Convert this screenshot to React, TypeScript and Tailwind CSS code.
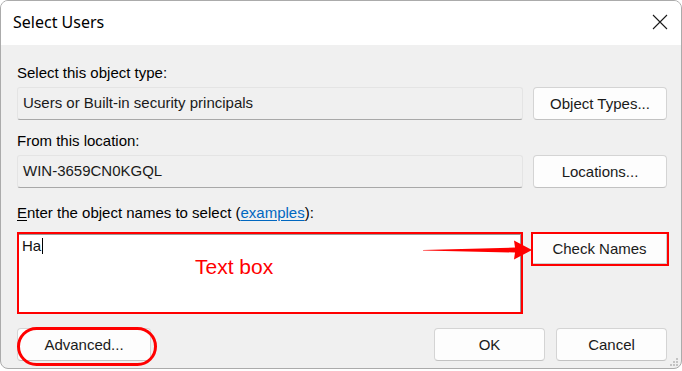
function Field({ text }: { text: string }) {
  return (
    <div className="w-[506px] h-[33px] shrink-0 flex items-center pl-[5px] pb-[2px] bg-[#f0f0f0] border border-[#e4e4e4] border-b-[#a8a8a8] rounded-[3px] text-[#1a1a1a]">
      {text}
    </div>
  );
}

function Btn({ label, w = 'w-[134px]', cls = '' }: { label: string; w?: string; cls?: string }) {
  return (
    <div
      className={`${w} h-[33px] shrink-0 flex items-center justify-center bg-[#fdfdfd] border border-[#d4d4d4] border-b-[#c2c2c2] rounded-[4px] text-[#1a1a1a] ${cls}`}
    >
      {label}
    </div>
  );
}

export default function App() {
  return (
    <div className="w-[682px] h-[371px] bg-white overflow-hidden text-[15px] leading-[17px] font-['Liberation_Sans',Arial,sans-serif]">
      <div className="relative w-[682px] h-[369px] flex flex-col rounded-[8px] border border-[#ababab] bg-[#f0f0f0] overflow-hidden">
        {/* Title bar */}
        <div className="h-[44px] shrink-0 bg-white flex items-center justify-between pl-[12px] pr-[13px]">
          <span className="text-[16px] font-['Noto_Sans',sans-serif] text-black -mt-[2px]">Select Users</span>
          <svg width="16" height="16" viewBox="0 0 16 16" className="-mt-[2px]">
            <path d="M1 1 L15 15 M15 1 L1 15" stroke="#1a1a1a" strokeWidth="1.1" />
          </svg>
        </div>

        {/* Body */}
        <div className="flex-1 flex flex-col pl-[16px] pr-[14px] pt-[19px] text-black">
          <div>Select this object type:</div>
          <div className="mt-[6px] flex gap-[10px]">
            <Field text="Users or Built-in security principals" />
            <Btn label="Object Types..." />
          </div>

          <div className="mt-[12px]">From this location:</div>
          <div className="mt-[6px] flex gap-[10px]">
            <Field text="WIN-3659CN0KGQL" />
            <Btn label="Locations..." />
          </div>

          <div className="mt-[16px]">
            <span className="underline underline-offset-[2px]">E</span>nter the object names to select (
            <span className="text-[#0067c0] underline underline-offset-[2px]">examples</span>):
          </div>

          <div className="relative mt-[11px] -mr-[2px] flex gap-[8px]">
            <div className="relative w-[506px] h-[82px] shrink-0 border-2 border-[#ff0000] bg-white">
              <div className="h-full border-t border-r border-[#9a9a9a] pl-[3px] pt-[2px] flex items-start">
                <span className="text-[#111]">Ha</span>
                <span className="w-[1px] h-[16px] bg-black ml-[1px] mt-[1px]" />
              </div>
              <span className="absolute left-[176px] top-[21px] text-[21px] leading-[24px] text-[#ff0000]">Text box</span>
            </div>
            <div className="w-[138px] h-[34px] shrink-0 flex items-center justify-center border-2 border-[#ff0000] bg-[#fdfdfd] text-[#1a1a1a]">
              <div className="w-full h-full flex items-center justify-center border-r border-b border-[#cfcfcf]">Check Names</div>
            </div>
            {/* annotation arrow */}
            <svg className="absolute left-[404px] top-[7px]" width="126" height="22" viewBox="0 0 126 22">
              <polygon points="2,11 94,8.5 93,1.5 111,11 93,20.5 94,13.5 2,11.6" fill="#ff0000" />
            </svg>
          </div>

          <div className="relative mt-[14px] flex items-center">
            <Btn label="Advanced..." />
            <div className="flex-1" />
            <Btn label="OK" w="w-[111px]" cls="border-[#5b9fe0] border-b-[#4a90d9]" />
            <Btn label="Cancel" w="w-[111px]" cls="ml-[11px]" />
            <div className="absolute left-0 -top-[1px] w-[140px] h-[39px] rounded-full border-[3px] border-[#ff0000]" />
          </div>
        </div>

        {/* resize grip */}
        <svg className="absolute right-[2px] bottom-[1px]" width="10" height="10" viewBox="0 0 10 10">
          <rect x="7" y="1" width="2" height="2" fill="#c4c4c4" />
          <rect x="4" y="4" width="2" height="2" fill="#c4c4c4" />
          <rect x="7" y="4" width="2" height="2" fill="#c4c4c4" />
          <rect x="1" y="7" width="2" height="2" fill="#c4c4c4" />
          <rect x="4" y="7" width="2" height="2" fill="#c4c4c4" />
          <rect x="7" y="7" width="2" height="2" fill="#c4c4c4" />
        </svg>
      </div>
    </div>
  );
}
